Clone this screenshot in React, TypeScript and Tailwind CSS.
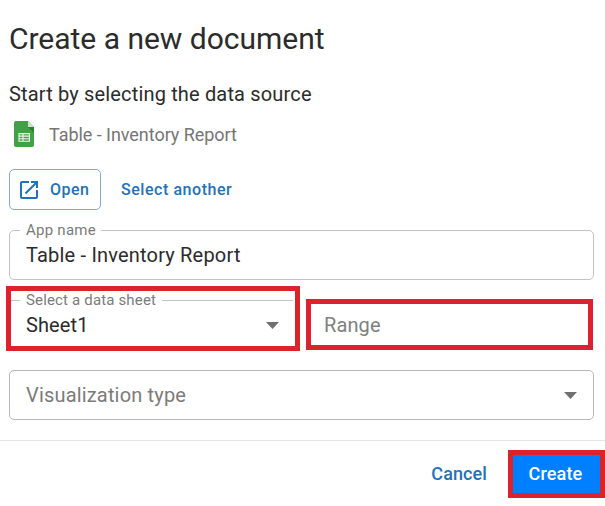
import React from 'react';

function Caret() {
  return (
    <svg viewBox="0 0 12 6" className="mt-px h-[7px] w-[13px] shrink-0" preserveAspectRatio="none">
      <path d="M0 0h12L6 6z" fill="#707070" />
    </svg>
  );
}

function SheetIcon() {
  return (
    <svg viewBox="0 0 20 26" className="h-[26px] w-5 shrink-0">
      <path d="M2 0h12l6 6v18a2 2 0 0 1-2 2H2a2 2 0 0 1-2-2V2a2 2 0 0 1 2-2z" fill="#43a047" />
      <path d="M14 6h6v6z" fill="#2e7d32" />
      <path d="M14 0l6 6h-6z" fill="#c8e6c9" />
      <path d="M5 12.6h10.4v7.6H5zM5 15.1h10.4M5 17.7h10.4M9 12.6v7.6" fill="none" stroke="#eef7ee" strokeWidth="1.1" />
    </svg>
  );
}

function OpenIcon() {
  return (
    <svg viewBox="0 0 24 24" className="mr-[9px] h-6 w-6 shrink-0">
      <path d="M19 19H5V5h7V3H5a2 2 0 0 0-2 2v14a2 2 0 0 0 2 2h14a2 2 0 0 0 2-2v-7h-2zM14 3v2h3.59l-9.83 9.83 1.41 1.41L19 6.41V10h2V3z" fill="currentColor" />
    </svg>
  );
}

export default function App() {
  return (
    <main className="flex h-[506px] w-[605px] flex-col overflow-hidden bg-white font-[Roboto,sans-serif] text-[#2b2b2b]">
      <h1 className="mt-[19px] ml-[9px] text-[30px] leading-10 tracking-[-0.02px] whitespace-nowrap">Create a new document</h1>
      <p className="mt-[23px] ml-[9px] text-[20px] leading-6 tracking-[0.16px] whitespace-nowrap">Start by selecting the data source</p>
      <div className="mt-[15px] ml-[14px] flex h-[26px] items-center">
        <SheetIcon />
        <span className="ml-[15px] text-[18px] tracking-[-0.05px] whitespace-nowrap text-[#757575]">Table - Inventory Report</span>
      </div>
      <div className="mt-[22px] ml-[9px] flex h-[41px] shrink-0 items-center text-[16px] font-medium text-[#2272b9]">
        <button className="flex h-[41px] w-[92px] items-center rounded-[5px] border border-[#8aa9cc] pl-[7px] tracking-[0.5px]">
          <OpenIcon />
          Open
        </button>
        <button className="ml-5 tracking-[0.55px] whitespace-nowrap">Select another</button>
      </div>
      <fieldset className="mt-[12px] ml-[9px] h-[58px] w-[585px] shrink-0 rounded-[5px] border border-[#c0c4c5] px-[10px]">
        <legend className="pr-[5px] pl-[6px] text-[15px] leading-4 tracking-[0.25px] text-[#7b7b7b]">App name</legend>
        <div className="pt-[5px] pl-[6px] text-[20px] leading-6 tracking-[0.19px]">Table - Inventory Report</div>
      </fieldset>
      <div className="mt-[6px] ml-[6px] flex h-[65px] w-[587px] shrink-0 items-start justify-between">
        <section className="h-[65px] w-[294px] border-[5px] border-[#dc222b]">
          <div className="flex h-[18px] items-center text-[15px] leading-4 tracking-[0.16px] text-[#7b7b7b]">
            <span className="h-px w-[9px] bg-[#c0c4c5]" />
            <span className="w-[142px] pl-[6px] whitespace-nowrap">Select a data sheet</span>
            <span className="h-px w-[131px] bg-[#c0c4c5]" />
          </div>
          <div className="flex h-[32px] items-center justify-between pr-[16px] pl-[15px]">
            <span className="text-[20px] tracking-[0.1px]">Sheet1</span>
            <Caret />
          </div>
        </section>
        <section className="mt-[13px] flex h-[51px] w-[287px] items-center border-[5px] border-[#dc222b] pl-[13px] text-[20px] tracking-[0.1px] text-[#808080]">Range</section>
      </div>
      <div className="mt-[19px] ml-[9px] flex h-[50px] w-[585px] shrink-0 items-center justify-between rounded-[5px] border border-[#b8b8b8] pr-[16px] pl-4">
        <span className="text-[20px] tracking-[0.17px] text-[#7b7b7b]">Visualization type</span>
        <Caret />
      </div>
      <footer className="mt-5 flex h-[66px] shrink-0 items-start justify-end border-t border-[#e6e6e6] pt-[9px] text-[18px] font-medium">
        <button className="mr-[21px] h-12 pb-[2px] tracking-[0.1px] text-[#2272b9]">Cancel</button>
        <button className="h-12 w-[97px] border-[5px] border-[#dc222b] bg-[#007fff] pr-[2px] pb-[2px] tracking-[0.15px] text-white">Create</button>
      </footer>
    </main>
  );
}
